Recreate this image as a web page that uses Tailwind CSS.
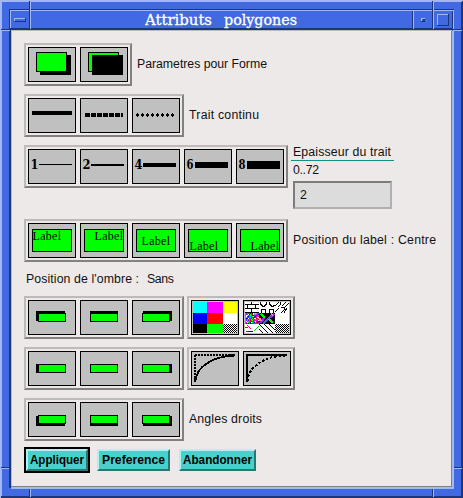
<!DOCTYPE html>
<html lang="fr">
<head>
<meta charset="utf-8">
<title>Attributs polygones</title>
<script src="https://cdn.jsdelivr.net/npm/@tailwindcss/browser@4"></script>
</head>
<body class="w-[463px] h-[498px] overflow-hidden bg-[#4169e1] font-['Liberation_Sans',Arial,sans-serif] text-[12px] leading-[14px] text-black">
<div class="relative flex flex-col w-[463px] h-[498px]">
  <!-- window frame bevels -->
  <svg class="absolute inset-0 -z-10" width="463" height="498" shape-rendering="crispEdges">
    <rect width="463" height="498" fill="#4169e1"/>
    <path d="M0 0H463V2H2V498H0Z" fill="#a3b8f2"/>
    <path d="M463 1V498H1V496H461V2Z" fill="#1f3579"/>
    <path d="M9 9H454V10H10V488H9Z" fill="#1f3579"/>
    <path d="M10 10H454V11H11V29H10Z" fill="#a3b8f2"/>
    <path d="M10 28H453V30H11V488H10Z" fill="#1f3579"/>
    <path d="M452 11H453V30H452Z" fill="#1f3579"/>
    <path d="M453 10H454V31H453ZM452 31H454V489H11V487H452Z" fill="#a3b8f2"/>
    <rect x="11" y="30" width="441" height="457" fill="#bebab9"/>
    <path d="M451 31H452V487H11V486H451Z" fill="#84807f"/>
    <rect x="12" y="31" width="439" height="455" fill="#ede9e8"/>
    <path d="M29 1h1v28h-1zM432 1h1v28h-1zM412 11h1v18h-1zM1 29h9v1h-9zM453 29h9v1h-9zM1 467h9v1h-9zM454 467h8v1h-8zM29 489h1v8h-1zM432 489h1v8h-1z" fill="#1f3579"/>
    <path d="M30 1h1v28h-1zM433 1h1v28h-1zM413 11h1v18h-1zM2 30h8v1h-8zM453 30h9v1h-9zM2 468h7v1h-7zM454 468h8v1h-8zM30 489h1v8h-1zM433 489h1v8h-1z" fill="#a3b8f2"/>
    <path d="M14 18h12v1h-11v3h-1zM421 18h4v1h-3v3h-1zM437 14h12v1h-11v11h-1z" fill="#a3b8f2"/>
    <path d="M26 18v4h-12v-1h11v-3zM425 19v3h-4v-1h2v-2zM449 14v12h-12v-1h11v-11z" fill="#1f3579"/>
  </svg>

  <header class="h-[31px] shrink-0 pt-[11px] pl-[145px]">
    <h1 class="text-white"><svg class="block" width="160" height="18"><text x="0" y="14" fill="#fff" stroke="#fff" stroke-width=".3" font-family="DejaVu Serif, serif" font-size="14.5" xml:space="preserve"><tspan textLength="67" lengthAdjust="spacingAndGlyphs">Attributs</tspan><tspan x="79" textLength="73" lengthAdjust="spacingAndGlyphs">polygones</tspan></text></svg></h1>
  </header>

  <main id="main" class="flex flex-col items-start pl-[24px] pt-[12px]"></main>
</div>

<script>
const G = '#00ff00';
const r = (x, y, w, h, f = '#000') => `<rect x="${x}" y="${y}" width="${w}" height="${h}" fill="${f}"/>`;
const box = (x, y, w, h, f = G) => r(x, y, w, h) + r(x + 1, y + 1, w - 2, h - 2, f);
const cell = c => `<svg class="block shrink-0" width="48" height="35" shape-rendering="crispEdges">${box(0, 0, 48, 35, '#c0c0c0')}${c}</svg>`;
const group = cells => `<div class="flex gap-1 p-[2px] border-2 border-t-[#bebab9] border-l-[#bebab9] border-r-[#84807f] border-b-[#84807f] shrink-0">${cells.map(cell).join('')}</div>`;
// fixed-width label: text, width, extra classes
const text = (s, w, cls = '') => `<svg class="block shrink-0 ${cls}" width="${w + 4}" height="14"><text x="0" y="11" font-family="Liberation Sans, Arial, sans-serif" font-size="12.3" textLength="${w}" lengthAdjust="spacing" fill="#111" xml:space="preserve">${s}</text></svg>`;
const row = (cls, c) => `<div class="flex ${cls}">${c}</div>`;

const shapes = [
  r(12, 8, 31, 20) + box(8, 5, 31, 20),
  box(8, 5, 31, 20) + r(12, 8, 31, 20)
];
let dashes = '', dots = '';
for (let i = 0; i < 7; i++) dashes += r(5 + i * 6, 15, i == 6 ? 2 : 5, 4);
for (let i = 0; i < 8; i++) dots += r(4 + i * 5, 16, 3, 2) + r(5 + i * 5, 15, 1, 4);
const lines = [r(4, 13, 40, 4), dashes, dots];
const num = (n, y, h) => `<text x="2.5" y="20" font-family="DejaVu Serif, serif" font-weight="bold" font-size="12" textLength="${n < 5 ? 8 : 7}" lengthAdjust="spacingAndGlyphs">${n}</text>` + r(11, y, 33, h);
const widths = [num(1, 15, 1), num(2, 15, 2), num(4, 14, 4), num(6, 13, 6), num(8, 12, 8)];
const lab = (x, y) => box(4, 6, 40, 23) + `<text x="${x}" y="${y}" font-family="Liberation Serif, serif" font-size="12" textLength="28.5">Label</text>`;
const labels = [lab(4.5, 17), lab(14.5, 17), lab(9.5, 22), lab(5.5, 27), lab(14.5, 27)];
const sh = (x, y, w, h) => r(x, y, w, h) + box(10, 13, 28, 9);

const colors = ['#00ffff', '#ff00ff', '#ffff00', '#0000ff', '#ff0000', '#ffffff', '#000000', '#00ff00', null];
const X = [2, 16, 32, 46], Y = [2, 13, 24, 33];
const checker = (x0, y0, x1, y1) => {
  let s = r(x0, y0, x1 - x0, y1 - y0, '#fff');
  for (let y = y0; y < y1; y++) for (let x = x0; x < x1; x++) if ((x + y) % 2) s += r(x, y, 1, 1);
  return s;
};
let palette = '';
colors.forEach((c, i) => {
  const a = i % 3, b = i / 3 | 0;
  palette += c ? r(X[a], Y[b], X[a + 1] - X[a], Y[b + 1] - Y[b], c) : checker(X[a], Y[b], X[a + 1], Y[b + 1]);
});
const noisy = ['#ff0000', '#0000ff', '#00ff00', '#ff00ff', '#ffffff', '#00aaff', '#8020e0'];
let noise = '';
for (let y = 13; y < 24; y++) for (let x = 2; x < 16; x++) noise += r(x, y, 1, 1, noisy[(x * 7 + y * 5 + (x * y >> 1) + (x ^ y)) % 7]);
const p = (d, c = '#000', w = 1) => `<path d="${d}" fill="none" stroke="${c}" stroke-width="${w}"/>`;
const motifs = r(2, 2, 44, 31, '#fff')
  + p('M2 4.5H16M2 8.5H16M2 12.5H16M8.5 2V4M4.5 5V8M12.5 5V8M8.5 9V12')
  + p('M17.5 2v2l2 2h2l2-2v-2M26.5 2v2l2 2h2l1-1M18.5 13v-3l1-1h2l1 1v3M26.5 13v-3l1-1h2l1 1v3')
  + p('M32 6l4-4M35 7l3 -3l-1-2M32 12l4-4M39 6l4-4M38 8l3-1l1 2l-4 4M42 7l4-4M44 8l-3 5')
  + noise + r(16, 13, 16, 11)
  + p('M20 24l9-9', '#3060ff', 2) + p('M18 14l4 4M26 19l4 4', G, 2.5) + p('M17 23l4-5M27 18l4-4', '#a020f0', 2.5) + p('M16 18l2 3M28 14l2 1', '#ff80a0', 2)
  + r(2, 24, 14, 9, '#fff')
  + p('M4 25l4 4', '#ff0080') + p('M3 31h3M2 27.5h3', '#ff0000') + p('M5 31.5h5', '#0000ff') + p('M11 31l5-5', '#00cc00')
  + p('M16 29l4 4M16 24l9 9M21 24l9 9M26 24l6 6')
  + checker(32, 24, 46, 33);
const frameOf = c => r(1, 1, 46, 33, '#c0c0c0') + c;

const curve = 'M4.5 30C5 22 9 17 15 13C23 7 31 5 44 4.5';
let round1 = p(curve, '#000', 1.8), round2 = `<path d="${curve}" fill="none" stroke="#000" stroke-width="2" stroke-dasharray="2.5 1.8"/>`;
for (let i = 0; i < 12; i++) round1 += r(4 + i * 3, 3, 2, 2);
for (let i = 1; i < 8; i++) round1 += r(3, 1 + i * 3, 2, 2);
round1 += r(37, 3, 7, 2) + r(3, 25, 2, 6);
round2 += r(3, 3, 41, 2) + r(3, 3, 2, 28);

const button = (s, w, tw, pad) => `<button class="block h-[22px] bg-[#48d1cc] border-2 border-t-[#b0f0ee] border-l-[#b0f0ee] border-r-[#2a7673] border-b-[#2a7673]" style="width:${w}px"><svg class="block overflow-visible" width="${w - 4}" height="18"><text x="${pad}" y="12.5" font-family="Liberation Sans, Arial, sans-serif" font-weight="bold" font-size="12.3" textLength="${tw}" lengthAdjust="spacingAndGlyphs">${s}</text></svg></button>`;

document.getElementById('main').innerHTML =
  row('', group(shapes) + text('Parametres pour Forme', 130, 'mt-[14px] ml-[5px]')) +
  row('mt-[8px]', group(lines) + text('Trait continu', 70, 'mt-[14px] ml-[5px]')) +
  row('mt-[8px] h-[74px] items-start', group(widths) +
    `<div class="flex flex-col ml-[3px]"><div class="w-[103px] h-[16px] border-b border-[#138f87]">${text('Epaisseur du trait', 98, 'ml-[2px]')}</div>
     ${text('0..72', 26, 'mt-[2px] ml-[2px]')}
     <div class="mt-[4px] ml-[2px] w-[99px] h-[28px] bg-[#dcdcdc] border-2 border-t-[#7c7c7c] border-l-[#7c7c7c] border-r-[#b0b0b0] border-b-[#b0b0b0] pl-[5px] pt-[5px]">${text('2', 6.5)}</div></div>`) +
  row('', group(labels) + text('Position du label : Centre', 143, 'mt-[14px] ml-[5px]')) +
  row('mt-[10px] h-[24px] pl-[2px]', text("Position de l'ombre :", 113) + text('Sans', 27, 'ml-[4px]')) +
  row('gap-[3px]', group([sh(8, 11, 29, 10), sh(10, 11, 28, 10), sh(11, 11, 29, 10)]) + group([frameOf(palette), frameOf(motifs)])) +
  row('mt-[8px] gap-[3px]', group([sh(8, 13, 29, 9), sh(10, 13, 28, 9), sh(11, 13, 29, 9)]) + group([round1, round2])) +
  row('mt-[8px]', group([sh(8, 14, 29, 10), sh(10, 14, 28, 10), sh(11, 14, 29, 10)]) + text('Angles droits', 73, 'mt-[14px] ml-[5px]')) +
  row('mt-[6px] items-center', `<div class="border-2 border-black">${button('Appliquer', 62, 54, 2)}</div>` +
    `<div class="ml-[7px]">${button('Preference', 73, 63, 3)}</div><div class="ml-[9px]">${button('Abandonner', 77, 69, 2)}</div>`);
</script>
</body>
</html>
